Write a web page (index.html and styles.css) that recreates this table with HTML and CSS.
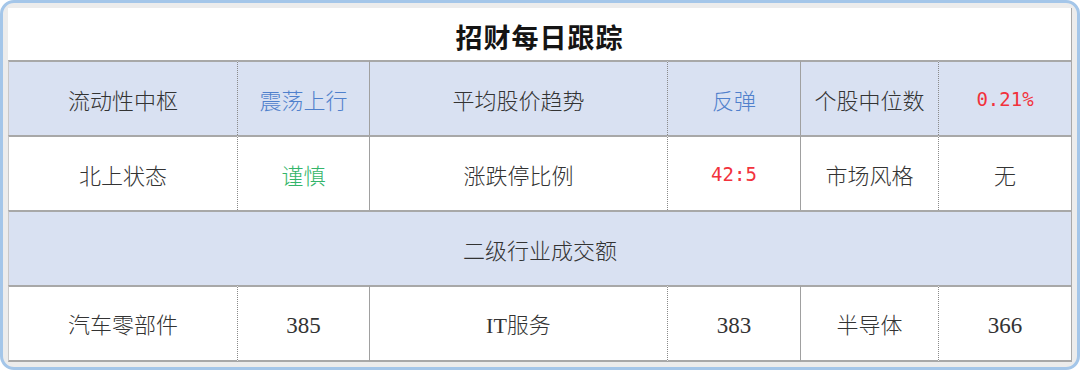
FILE: index.html
```html
<!DOCTYPE html>
<html lang="zh">
<head>
<meta charset="utf-8">
<link rel="stylesheet" href="styles.css">
</head>
<body>
<div class="frame">
  <div class="sheet">
    <div class="cell title">招财每日跟踪</div>

    <div class="cell shade first">流动性中枢</div>
    <div class="cell shade blue dotted">震荡上行</div>
    <div class="cell shade">平均股价趋势</div>
    <div class="cell shade blue dotted">反弹</div>
    <div class="cell shade">个股中位数</div>
    <div class="cell shade red mono dotted last">0.21%</div>

    <div class="cell first">北上状态</div>
    <div class="cell green dotted">谨慎</div>
    <div class="cell">涨跌停比例</div>
    <div class="cell red mono dotted">42:5</div>
    <div class="cell">市场风格</div>
    <div class="cell dotted last">无</div>

    <div class="cell shade span first last">二级行业成交额</div>

    <div class="cell first bottom">汽车零部件</div>
    <div class="cell dotted bottom num">385</div>
    <div class="cell bottom">IT服务</div>
    <div class="cell dotted bottom num">383</div>
    <div class="cell bottom">半导体</div>
    <div class="cell dotted last bottom num">366</div>
  </div>
</div>
</body>
</html>
```

FILE: styles.css
```css
html, body {
  margin: 0;
  padding: 0;
  background: #ffffff;
}

.frame {
  box-sizing: border-box;
  width: 1080px;
  height: 370px;
  border: 3px solid #a4c6e9;
  border-radius: 14px;
  background: #ececec;
  padding: 5px;
}

.sheet {
  display: grid;
  grid-template-columns: 229px 132px 298px 133px 138px 134px;
  grid-template-rows: 52px 75px 75px 75px 77px;
  background: #ffffff;
  height: 354px;
  font-family: "Liberation Serif", "Noto Sans CJK SC", serif;
  font-size: 22px;
  font-weight: 300;
  color: #333333;
}

.cell {
  box-sizing: border-box;
  display: flex;
  align-items: center;
  justify-content: center;
  border-top: 2px solid #a8a8a8;
  border-left: 1px solid #a0a0a0;
  padding-top: 1px;
}

.cell.first {
  border-left: 1px solid #c8c8c8;
}

.cell.dotted {
  border-left: 1px dotted #8a8a8a;
}

.cell.last {
  border-right: 1px solid #a8a8a8;
}

.cell.bottom {
  border-bottom: 2px solid #a8a8a8;
  padding-bottom: 2px;
}

.cell.num {
  font-size: 23px;
  font-weight: 400;
  padding-top: 6px;
}

.title {
  grid-column: 1 / -1;
  border-top: none;
  border-left: none;
  border-right: 1px solid #a8a8a8;
  font-family: "Noto Sans CJK SC", sans-serif;
  font-weight: 700;
  font-size: 27px;
  color: #141414;
  letter-spacing: 1px;
  padding-top: 4px;
}

.span {
  grid-column: 1 / -1;
}

.shade {
  background: #d9e1f2;
}

.blue {
  color: #4f80cc;
}

.green {
  color: #34b56a;
}

.red {
  color: #f2323c;
}

.mono {
  font-family: "DejaVu Sans Mono", monospace;
  font-size: 19px;
  font-weight: 400;
}
```
